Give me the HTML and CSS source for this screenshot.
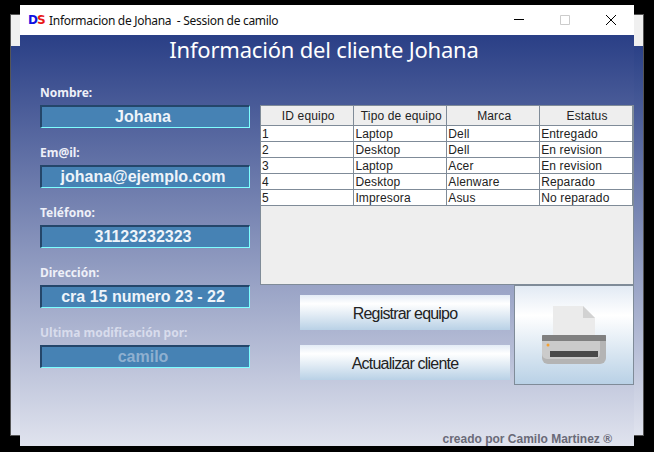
FILE: index.html
```html
<!DOCTYPE html>
<html lang="en">
<head>
    <meta charset="UTF-8">
    <meta name="viewport" content="width=device-width, initial-scale=1.0">
    <title>Informacion de Johana</title>
    <link rel="stylesheet" href="styles.css">
</head>
<body>
    <div class="back-window"></div>

    <div class="window">
        <div class="titlebar">
            <span class="logo"><span class="logo-d">D</span><span class="logo-s">S</span></span>
            <span class="window-title">Informacion de Johana  - Session de camilo</span>
            <div class="controls">
                <svg class="control" width="46" height="30" viewBox="0 0 46 30"><path d="M18 14.5h10" stroke="#000" fill="none"/></svg>
                <svg class="control" width="46" height="30" viewBox="0 0 46 30"><path d="M18.500 10.500h9v9h-9z" stroke="#ccc" fill="none"/></svg>
                <svg class="control" width="46" height="30" viewBox="0 0 46 30"><path d="M18 10l10 10M28 10l-10 10" stroke="#000" fill="none"/></svg>
            </div>
        </div>

        <div class="content">
            <h1 class="heading">Información del cliente Johana</h1>

            <div class="main">
                <div class="fields">
                    <div class="field">
                        <label>Nombre:</label>
                        <div class="value">Johana</div>
                    </div>
                    <div class="field">
                        <label>Em@il:</label>
                        <div class="value">johana@ejemplo.com</div>
                    </div>
                    <div class="field">
                        <label>Teléfono:</label>
                        <div class="value">31123232323</div>
                    </div>
                    <div class="field">
                        <label>Dirección:</label>
                        <div class="value">cra 15 numero 23 - 22</div>
                    </div>
                    <div class="field field-disabled">
                        <label>Ultima modificación por:</label>
                        <div class="value">camilo</div>
                    </div>
                </div>

                <div class="right">
                    <div class="table-panel">
                        <table>
                            <thead>
                                <tr>
                                    <th>ID equipo</th>
                                    <th>Tipo de equipo</th>
                                    <th>Marca</th>
                                    <th>Estatus</th>
                                </tr>
                            </thead>
                            <tbody>
                                <tr><td>1</td><td>Laptop</td><td>Dell</td><td>Entregado</td></tr>
                                <tr><td>2</td><td>Desktop</td><td>Dell</td><td>En revision</td></tr>
                                <tr><td>3</td><td>Laptop</td><td>Acer</td><td>En revision</td></tr>
                                <tr><td>4</td><td>Desktop</td><td>Alenware</td><td>Reparado</td></tr>
                                <tr><td>5</td><td>Impresora</td><td>Asus</td><td>No reparado</td></tr>
                            </tbody>
                        </table>
                    </div>

                    <div class="actions">
                        <div class="buttons">
                            <button>Registrar equipo</button>
                            <button>Actualizar cliente</button>
                        </div>
                        <div class="printer-button">
                            <svg width="64" height="58" viewBox="0 0 64 58">
                                <path d="M11 0h30l12 12v18H11z" fill="#ebebeb"/>
                                <path d="M41 0l12 12H41z" fill="#d2d2d2"/>
                                <path d="M0 29h64v23a6 6 0 0 1-6 6H6a6 6 0 0 1-6-6z" fill="#b4b4b4"/>
                                <path d="M0 29h58v19a5 5 0 0 1-5 5H5a5 5 0 0 1-5-5z" fill="#cbcbcb"/>
                                <path d="M1 29h62a1 1 0 0 1 1 1v5H0v-5a1 1 0 0 1 1-1z" fill="#808080"/>
                                <rect x="8" y="45" width="48" height="6" fill="#4a4a4a"/>
                                <circle cx="6" cy="39" r="1.500" fill="#f5a030"/>
                            </svg>
                        </div>
                    </div>
                </div>
            </div>

            <div class="footer">creado por Camilo Martinez ®</div>
        </div>
    </div>
</body>
</html>
```

FILE: styles.css
```css
html, body {
    height: 100%;
}

body {
    margin: 0;
    background-color: #000;
    position: relative;
    overflow: hidden;
    font-family: "Liberation Sans", Arial, sans-serif;
}

.back-window {
    position: absolute;
    left: 10px;
    top: 14px;
    width: 632px;
    height: 420px;
    border: 1px solid #555;
    background: linear-gradient(to bottom, #f0f0f0 0, #f0f0f0 31px, #2b4187 31px, #e0e3ee 100%);
}

.window {
    position: absolute;
    left: 20px;
    top: 5px;
    width: 614px;
    height: 441px;
    display: flex;
    flex-direction: column;
}

.titlebar {
    height: 30px;
    background-color: #fff;
    display: flex;
    align-items: center;
    flex-shrink: 0;
}

.logo {
    width: 29px;
    padding-left: 8px;
    box-sizing: border-box;
    font-family: "DejaVu Sans", sans-serif;
    font-size: 12px;
    font-weight: bold;
    letter-spacing: -1px;
}

.logo-d {
    color: #1010e0;
}

.logo-s {
    color: #e81818;
}

.window-title {
    font-family: "Noto Sans", sans-serif;
    font-size: 12px;
    letter-spacing: -0.3px;
    color: #111;
    white-space: pre;
}

.controls {
    margin-left: auto;
    display: flex;
}

.control {
    display: block;
}

.content {
    flex: 1;
    display: flex;
    flex-direction: column;
    background: linear-gradient(to bottom, #2a3f86, #e0e3ee);
}

.heading {
    margin: 0;
    height: 30px;
    padding-right: 6px;
    line-height: 28px;
    text-align: center;
    font-family: "Noto Sans", sans-serif;
    font-size: 22px;
    letter-spacing: -0.2px;
    font-weight: normal;
    color: #fff;
}

.main {
    margin-top: 40px;
    margin-left: 20px;
    display: flex;
    gap: 10px;
}

.fields {
    width: 210px;
    margin-top: -20px;
    display: flex;
    flex-direction: column;
    gap: 17px;
}

.field label {
    display: block;
    height: 20px;
    line-height: 15px;
    font-family: "Noto Sans", sans-serif;
    font-size: 12px;
    font-weight: bold;
    color: #eef0f8;
}

.value {
    height: 23px;
    box-sizing: border-box;
    padding-right: 5px;
    line-height: 19px;
    text-align: center;
    font-size: 16px;
    font-weight: bold;
    color: #eef4fa;
    background-color: #4682b4;
    border-style: solid;
    border-width: 2px 1px 1px 2px;
    border-color: #24466a #7fffff #7fffff #24466a;
}

.field-disabled .value {
    color: #8fb0d0;
}

.field-disabled label {
    color: #d8dcec;
}

.right {
    width: 374px;
}

.table-panel {
    height: 180px;
    box-sizing: border-box;
    background-color: #eee;
    border: 1px solid #7f8b98;
}

table {
    width: 372px;
    table-layout: fixed;
    border-collapse: collapse;
    font-size: 12px;
    letter-spacing: 0.15px;
    color: #222;
}

th, td {
    border: 1px solid #7f8b98;
    overflow: hidden;
    white-space: nowrap;
}

th {
    height: 19px;
    box-sizing: border-box;
    padding: 2px 0 0 2px;
    font-weight: normal;
    text-align: center;
    background-color: #eee;
    border-top: none;
    border-left: none;
}

td {
    height: 16px;
    box-sizing: border-box;
    padding: 1px 1px 0;
    line-height: 14px;
    background-color: #fff;
    text-align: left;
    border-left: none;
}

.actions {
    display: flex;
}

.buttons {
    width: 210px;
    margin-left: 40px;
    padding-top: 10px;
    display: flex;
    flex-direction: column;
    gap: 15px;
}

button {
    height: 35px;
    padding: 2px 0 0;
    border: none;
    font-family: "Liberation Sans", Arial, sans-serif;
    font-size: 16px;
    letter-spacing: -0.8px;
    color: #222;
    background: linear-gradient(to bottom, #e4ecf6 0, #fff 25%, #b9d1e6 100%);
}

.printer-button {
    width: 120px;
    height: 100px;
    margin-left: 4px;
    box-sizing: border-box;
    border: 1px solid #7f8b98;
    background: linear-gradient(to bottom, #e2eaf4 0, #fff 30%, #b9d1e6 100%);
    display: flex;
    align-items: center;
    justify-content: center;
}

.footer {
    margin-top: auto;
    height: 13px;
    padding-right: 22px;
    line-height: 13px;
    text-align: right;
    font-size: 12px;
    font-weight: bold;
    color: #6a6a78;
}
```
